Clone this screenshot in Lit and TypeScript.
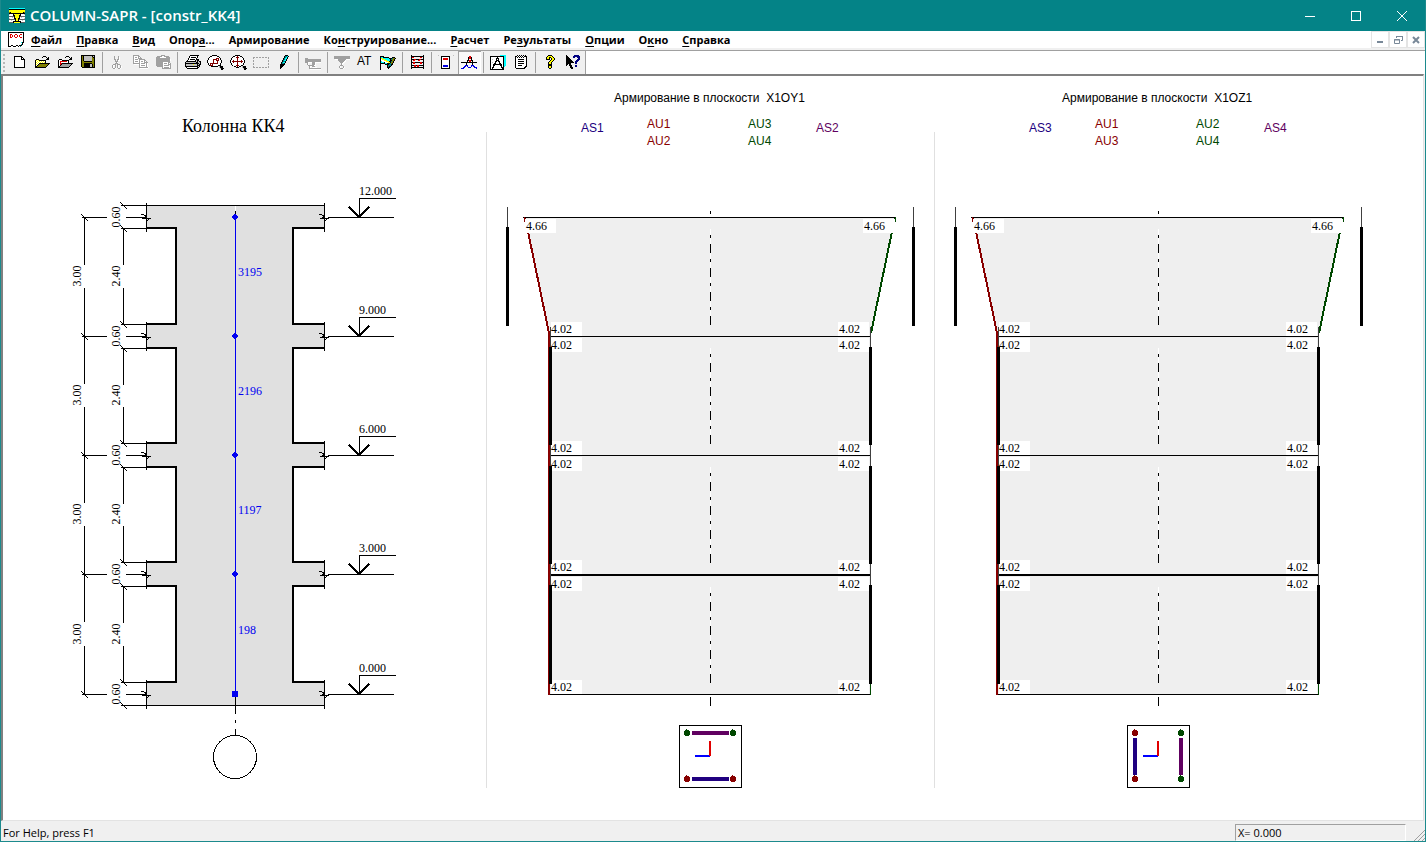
import { LitElement, html, svg, css, nothing } from "lit";
import { customElement, property } from "lit/decorators.js";

const PALETTE: Record<string, string> = {
  k: "#000000", w: "#ffffff", y: "#ffff00", o: "#808000", g: "#a0a0a0",
  r: "#e00000", m: "#800000", c: "#00ffff", t: "#008080", b: "#0000e0",
  n: "#000080", s: "#c0c0c0", d: "#606060", e: "#006000",
};

const GLYPHS: Record<string, string[]> = {
  new: [
    "", "...kkkkkkkk", "...kwwwwwwkk", "...kwwwwwwkwk", "...kwwwwwwkkkk",
    "...kwwwwwwwwwk", "...kwwwwwwwwwk", "...kwwwwwwwwwk", "...kwwwwwwwwwk",
    "...kwwwwwwwwwk", "...kwwwwwwwwwk", "...kwwwwwwwwwk", "...kkkkkkkkkkk",
  ],
  open: [
    "", ".........kkk", "........k...k.k", ".............kk", "..kkk.......kkk",
    ".kywykkkkkkk", ".kwywywywywk", ".kywywywywyk", ".kwywkkkkkkkkkkk", ".kywkoooooooook",
    ".kwkoooooooook", ".kkoooooooook", ".kkkkkkkkkkk",
  ],
  openRed: [
    "", ".........kkk", "........k...k.k", ".............kk", "..kkk.......kkk",
    ".kwwwkkkkkkk", ".kwrrrrrrrwk", ".kwrwwwwwwwk", ".kwrrkkkkkkkkkkk", ".kwrkgggggggggk",
    ".kwkgggggggggk", ".kkgggggggggk", ".kkkkkkkkkkk",
  ],
  save: [
    ".kkkkkkkkkkkkkk", ".kokssssssssksk", ".kokssssssssokk", ".kokssssssssook", ".kokssssssssook",
    ".kokssssssssook", ".kookkkkkkkkook", ".kooooooooooook", ".kookkkkkkkkook",
    ".kookkkkkksskok", ".kookkkkkksskok", ".kookkkkkksskok", "..kkkkkkkkkkkkk",
  ],
  cut: [
    "", ".....g...g", ".....g...gw", ".....g...gw", ".....gg.ggw", "......g.gww", "......ggg",
    ".......gw", "......ggg", "....ggg.ggg", "...gwwg.gw.g", "...gw.g.gw.gw",
    "...gw.g.gw.gw", "....ggw..ggw",
  ],
  copy: [
    ".gggggg", ".gwwwwgg", ".gwggwgwg", ".gwwwwgggg", ".gwgggwgggggg", ".gwwwwwgwwwwgg",
    ".gwgggwgwggwgwg", ".gwwwwwgwwwwgggg", ".gggggggwggggwgw", "..wwwwwgwwwwwwgw", ".......gwggggwgw", ".......gwwwwwwgw",
    ".......gggggggggw", "........wwwwwwww",
  ],
  paste: [
    "......gggg", "..gggggwwggggg", ".ggggwwwwwwgggg", ".gggggggggggggg", ".ggggggggggggggw",
    ".ggggggggggggggw", ".gggggggggggggg", ".gggggggwwwwwgg", ".gggggggwgggwgwg", ".gggggggwwwwwggg",
    ".gggggggwgggggwg", "..ggggggwwwwwwwg", ".......gwgggggwg", ".......ggggggggg",
  ],
  print: [
    "......kkkkkkkkk", ".....kwwwwwwwk", ".....kwkkkkkwk", "....kwwwwwwwk", "....kwkkkkkwkkk",
    "...kwwwwwwwkskk", "..kkkkkkkkkkskskk", ".ksssssssssskkssk", ".kkkkkkkkkkkkkksk", ".ksssssssyssskskk",
    ".kssssssssssskkk", ".kkkkkkkkkkkkksk", "..kwwwwwwwwwwkk", "...kkkkkkkkkkk",
  ],
  zoomRect: [
    ".....kkkkk", "...kkwwwwwkk", "..kwwwwwwwwwk", ".kwwwwwwwmmmwk", ".kwwwwmmmmwmwk", "kwwwwwmwwmmmwwk",
    "kwwwwwmwwwmwwwk", "kwwwwwmwwwmwwwk", ".kwmmmmmmmmwwk", ".kwmwmwwwwwwwk", "..kmmmwwwwwkkk",
    "....kkkkkkk.skkk", "............skkk", ".............skkk", "..............kk",
  ],
  zoomAll: [
    ".....kkkkk", "...kkwwmwwkk", "..kwwwmmmwwwk", ".kwwwwwmwwwwwk", ".kwwwwwmwwwwwk", "kwwmwwwmwwwmwwk",
    "kwmmmmmmmmmmmwk", "kwwmwwwmwwwmwwk", ".kwwwwwmwwwwwk", ".kwwwwwmwwwwwk", "..kwwwmmmwwkk",
    "....kkwmwkk.skkk", "......kkk...skkk", ".............skkk", "..............kk",
  ],
  marquee: [
    "", "", "gg.gg.gg.gg.gg.g", "g..............g", "", "g..............g", "g..............g", "",
    "g..............g", "g..............g", "", "g..............g", "gg.gg.gg.gg.gg.g",
  ],
  pen: [
    ".........kkk", "........kttck", "........ktck", ".......ktcck", ".......ktck", "......ktcck", "......kttk",
    ".....ktcck", ".....kttk", "....kkkkk", "....kkkk", "....kkk", "....kk", "....k",
  ],
  beam: [
    "", "", "", "ggg", "gggggggggggggggg", "gggggggggggggggg", "gggggggggggggggg", "gggwwwwgggwwwwww",
    "..gw...gggw", "..gw...gggw", "...ggggggww", "....gwwggg", "....gw..wwww", "....gggggggggggg", ".....wwwwwwwwwww",
  ],
  support: [
    "", "gggggggggggggggg", "gggggggggggggggg", "gggggggggggggggg", ".wwwggggggggwwww", "....gggggggw",
    ".....gggggww", "......gggww", ".......gww", ".......gw", "......ggg", ".....gw..g", ".....gw..gw", "......gggw",
  ],
  flag: [
    "", "kkkk", "kcckkkkkk...kkk", "kyycccccckkktook", "kwyyycccccktook", "kwwwyyyccckkook", "kcwwwwyyykktok",
    "kccckwwwyykook", "kkkkkcckkktok", "k....kkkkttkk", "k......ktttk", "k......ktkk", "k......kkk", "k.......k", "k",
  ],
  abacus: [
    "..k...........k", "..kkkkkkkkkkkkk", "..krr......rr.k", "..k...........k", "..kkkrrkkkrrkkk",
    "..k.rr...rr...k", "..k...........k", "..kkrrkkkkkrrkk", "..k.rr.....rr.k", "..k...........k",
    "..kkkrrkrrkkkkk", "..k..rr.rr....k", "..kkkkkkkkkkkkk", "..k...........k",
  ],
  card: [
    "s..............s", "...kkkkkkkkk", "...kwwwwwwwk", "...kwrrrrrwk", "...kwrrrrrwk", "...kwwwwwwwk",
    "...kwwwwwwwk", "...kwwwwwwwk", "...kwwwwwwwk", "...kwwwwwwwk", "...kwbbbbbwk", "...kwbbbbbwk",
    "...kwwwwwwwk", "...kkkkkkkkk",
  ],
  forces: [
    "", "........rr", ".......krrk", ".......krrk", ".......k..k", "......kkrrkk", "......k.rr.k",
    "kkkkkkkkkkkkkkkk", ".....k.....k", ".....k.....k", "....bbb...bbb", "...bb.b...b.bb",
    "..bb...bbb...bbb", "bbb............b",
  ],
  compass: [
    "..........cccccc", "kkkkkkkkkkkkkkcc", "kwwwwwwkwwwwwkcc", "kwwwwwkkkwwwwkcc", "kwswwwkwkwwwwkcc", "kwwwwwkkkwwwwkcc",
    "kwwwwkkwkkwwwkcc", "kwswwkwwwkwwwkcc", "kwwwkkwwwkkwwkcc", "kwwkkkkkkkkkwkcc", "kwwkkwwwwwkkwkcc",
    "kwwkwwwwwwwkwkc", "kwkkwwwwwwwkkk", "kwkwwwwwwwwwkk", "kkkkkkkkkkkkkk",
  ],
  notes: [
    "....k.k.k.k.k", "..kkwkwkwkwkkk", "..kwkwkwkwkwwk", "..kwwwwwwwwwwk", "..kwwkkkkkkwwk", "..kwwwwwwwwwwk",
    "..kwwkkkkkkwwk", "..kwwwwwwwwwwk", "..kwwkkkkkkwwk", "..kwwwwwwwwwwk", "..kwwkkkkwwwwk", "..kwwwwwwwwwkk",
    "..kwwwwwwwwkk", "...kkkkkkkkk",
  ],
  help: [
    "......kkkk", ".....kyyyyk", "....kyykkyyk", "....kyyk.kyyk", "....kkkk.kyyk", "........kyyk", ".......kyyk",
    "......kyyk", "......kyyk", "......kkkk", "......kkkk", "......kyyk", "......kyyk", ".......kk",
  ],
  whatsThis: [
    ".k.......nnnnn", ".kk.....nnnnnnn", ".kkk....nn..nnn", ".kkkk........nn", ".kkkkk......nnn", ".kkkkkk....nnn",
    ".kkkkkkk..nnn", ".kkkkkkkk.nn", ".kkkkk....nn", ".kk.kk", ".k..kkk...nn", ".....kk...nn", ".....kkk", "......kk",
  ],
  app: [
    "cccccccccccccccc", "kkkkkkkkkkkkkkkk", "yyyyyyyyyyyyyyyy", "yyyyyyyyyyyyyyyy", "okyyyyyyyyyyyyko", "kkkkkkkkkkkkkkkk",
    "swwwkyyyyyykwwws", "wwwwkkyyyykkwwww", "dddddkyyyykddddd", "wwwswkyyyykwswww", "swwwwkkyykkwwwws",
    "ddddddkyykdddddd", "wwswwwkyykwwwsww", "wwwwkkkkkkkkwwww", "ddddkyyyyyykdddd",
  ],
  doc: [
    "kkkkkkkkkkkkkkkk", "kwwwwwwwwwwwwwwk", "kwrrwwwrrwwwrrwk", "kwrwrwrwwrwrwwwk", "kwrwrwrwwrwrwwwk", "kwrrwwwrrwwwrrwk",
    "kwwwwwwwwwwwwwwk", "kwwwwwwwwwwwwwwk", "kwwwwwwwwwwwwwwk", "kwwwwwwwwwwwwwwk", "kwwwwwwwwwwwwckk", "kwwwwwwwwwwwwwk",
    "kwwwwwwwwwwwwtk", "kwwkkwwwkkwkkk", "kkk..kkk..k.t",
  ],
};

/** Small bitmap-style symbol: every character of a row is one cell. */
function glyph(name: string) {
  const cells = [];
  GLYPHS[name].forEach((row, y) => {
    for (let x = 0; x < row.length; ) {
      let end = x + 1;
      while (end < row.length && row[end] === row[x]) end++;
      if (PALETTE[row[x]]) cells.push(svg`<rect x=${x} y=${y} width=${end - x} height="1" fill=${PALETTE[row[x]]}></rect>`);
      x = end;
    }
  });
  return html`<svg class="glyph" viewBox="0 0 17 15" width="17" height="15" aria-hidden="true">${cells}</svg>`;
}

const rect = (x: number, y: number, w: number, h: number, fill = "#000") =>
  svg`<rect x=${x} y=${y} width=${w} height=${h} fill=${fill}></rect>`;
const label = (x: number, y: number, text: string, cls = "") => svg`<text x=${x} y=${y} class=${cls}>${text}</text>`;
const upright = (x: number, y: number, text: string) =>
  svg`<text text-anchor="middle" transform="translate(${x} ${y}) rotate(-90)">${text}</text>`;

@customElement("column-scheme")
export class ColumnScheme extends LitElement {
  static styles = css`
    :host { display: block; }
    svg { display: block; width: 100%; height: auto; shape-rendering: crispEdges; }
    text { font: 12px "Liberation Serif", serif; fill: #000; }
    .title { font-size: 18px; }
    .member { fill: #0000f0; }
    .thin { fill: none; stroke: #000; stroke-width: 1; }
    .bold { fill: none; stroke: #000; stroke-width: 2; }
  `;

  render() {
    const levels = [217, 336, 455, 574, 694];
    const marks = ["12.000", "9.000", "6.000", "3.000", "0.000"];
    const members = ["3195", "2196", "1197", "198"];
    const top = (i: number) => (i === 0 ? 205 : levels[i] - 13);
    const bottom = (i: number) => (i === 0 ? 227 : i === 4 ? 705 : levels[i] + 11);
    const tick = (x: number, y: number) => svg`<path class="thin" d="M${x - 3} ${y - 3}L${x + 4} ${y + 4}"></path>`;
    return html`<svg viewBox="3 76 484 744" role="img" aria-label="Колонна КК4">
      ${label(182, 132, "Колонна КК4", "title")}
      ${rect(176, 206, 118, 499, "#e0e0e0")}
      ${levels.map((y, i) => svg`
        ${rect(147, top(i), 177, bottom(i) - top(i), "#e0e0e0")}
        ${i === 0 ? rect(146, 205, 179, 1) : svg`${rect(146, top(i), 31, 2)}${rect(292, top(i), 33, 2)}`}
        ${i === 4 ? rect(146, 705, 179, 1) : svg`${rect(146, bottom(i), 31, 2)}${rect(292, bottom(i), 33, 2)}`}
        ${rect(146, y - 14, 1, 29)}${rect(324, y - 14, 1, 29)}
        ${rect(82, y, 25, 1)}${rect(126, y, 18, 1)}${rect(328, y, 66, 1)}
        ${[146, 324].map((x) => svg`<path class="thin" d="M${x - 5} ${y - 3}L${x + 1} ${y - 1}L${x - 2} ${y + 1}L${x + 5} ${y + 1}L${x} ${y + 4}"></path>`)}
        ${tick(84, y)}${tick(123, i === 0 ? 205 : top(i) + 1)}${tick(123, i === 4 ? 705 : bottom(i) + 1)}
        ${rect(121, i === 0 ? 205 : top(i) + 1, 25, 1)}${rect(121, i === 4 ? 705 : bottom(i) + 1, 25, 1)}
        ${upright(120, y, "0.60")}
        ${label(359, y - 22, marks[i])}
        ${rect(359, y - 19, 37, 1)}${rect(359, y - 19, 1, 20)}
        <path class="bold" d="M349 ${y - 10}L359 ${y}L369 ${y - 10}"></path>`)}
      ${members.map((name, i) => {
        const from = bottom(i);
        const to = top(i + 1) + 2;
        const mid = Math.round((levels[i] + levels[i + 1]) / 2 - 0.1);
        return svg`
          ${rect(175, from, 2, to - from)}${rect(292, from, 2, to - from)}
          ${rect(123, from + 2, 1, 36)}${rect(123, mid + 12, 1, to - mid - 12)}
          ${rect(84, levels[i], 1, 48)}${rect(84, mid + 12, 1, levels[i + 1] - mid - 12)}
          ${upright(81, mid, "3.00")}${upright(120, mid, "2.40")}
          ${label(238, mid, name, "member")}`;
      })}
      ${rect(235, 206, 1, 5, "#fff")}${rect(235, 211, 1, 4)}${rect(235, 217, 1, 474, "#0000f0")}
      ${levels.slice(0, 4).map((y) => svg`<path d="M234 ${y - 3}h2v1h1v1h1v2h-1v1h-1v1h-2v-1h-1v-1h-1v-2h1v-1h1z" fill="#0000f0"></path>`)}
      ${rect(232, 691, 6, 6, "#0000f0")}
      ${rect(235, 697, 1, 17)}${rect(235, 720, 1, 3)}${rect(235, 729, 1, 7)}
      <circle class="thin" cx="235" cy="757" r="21.5"></circle>
      ${rect(486, 132, 1, 656, "#e0e0e0")}
    </svg>`;
  }
}

@customElement("bar-scheme")
export class BarScheme extends LitElement {
  static styles = css`
    :host { display: block; }
    svg { display: block; width: 100%; height: auto; shape-rendering: crispEdges; }
    text { font: 12px "Liberation Serif", serif; fill: #000; }
    .sans { font-family: "Liberation Sans", sans-serif; }
    .navy { fill: #200080; }
    .plum { fill: #600060; }
    .red { fill: #880000; }
    .green { fill: #004800; }
  `;

  @property() plane = "";
  @property({ type: Array }) names: string[] = [];
  @property({ type: Number }) span = 448;
  @property({ type: Boolean }) vertical = false;
  @property({ type: Boolean }) divider = false;

  render() {
    const [sideA, leftA, leftB, rightA, rightB, sideB] = this.names;
    const value = (x: number, y: number, text: string, boxX = x, w = 31) =>
      svg`${rect(boxX, y - 11, w, 14, "#fff")}${label(x, y, text)}`;
    const solid = [[347, 98], [466, 98], [585, 99]];
    const hair = [[327, 20], [445, 21], [564, 21]];
    const dot = (x: number, y: number) => svg`<path
      d="M${x - 1} ${y - 4}h1v1h2v1h1v4h-1v1h-4v-1h-1v-4h1v-1h1z"
      fill=${(this.vertical ? x < 700 : y > 750) ? "#880000" : "#004800"}></path>`;
    return html`<svg viewBox="487 76 ${this.span} 744" role="img" aria-label="Армирование в плоскости ${this.plane}">
      <text class="sans" x="614" y="102">Армирование в плоскости${"\u00a0 "}${this.plane}</text>
      ${label(581, 132, sideA, "sans navy")}
      ${label(647, 128, leftA, "sans red")}${label(647, 145, leftB, "sans red")}
      ${label(748, 128, rightA, "sans green")}${label(748, 145, rightB, "sans green")}
      ${label(816, 132, sideB, "sans plum")}
      <path d="M524 217H896L871 333V694H549V333Z" fill="#efefef"></path>
      <path d="M525 217L549 333" stroke="#880000" stroke-width="2"></path>
      <path d="M895 217L871 333" stroke="#004800" stroke-width="2"></path>
      ${rect(548, 333, 2, 362, "#880000")}
      ${rect(523, 217, 373, 1)}${rect(550, 336, 320, 1)}${rect(550, 455, 320, 1)}${rect(550, 574, 320, 2)}${rect(550, 694, 320, 1)}
      ${value(526, 230, "4.66", 525)}${value(864, 230, "4.66", 863, 32)}
      ${[333, 349, 452, 468, 571, 588, 691].map((y) => svg`${value(551, y, "4.02")}${value(839, y, "4.02", 838)}`)}
      ${rect(524, 217, 1, 5, "#880000")}${rect(895, 217, 1, 5, "#004800")}
      ${solid.map(([y, h]) => svg`${rect(549, y, 3, h)}${rect(869, y, 3, h)}`)}
      ${hair.map(([y, h]) => svg`${rect(550, y, 1, h, "#404040")}${rect(870, y, 1, h, "#404040")}`)}
      ${rect(870, 684, 1, 11, "#004800")}
      ${[507, 913].map((x) => svg`${rect(x, 207, 1, 20, "#404040")}${rect(x - 1, 227, 3, 99)}`)}
      ${rect(710, 211, 1, 3)}${rect(710, 697, 1, 9)}
      ${[235, 354, 473, 593].map((y) => svg`${rect(710, y - 6, 1, 95, "#fff")}
        ${[0, 24, 48, 72].map((d) => svg`${rect(710, y + d, 1, 3)}${rect(710, y + d + 9, 1, 9)}`)}`)}
      ${rect(679, 725, 63, 63)}${rect(680, 726, 61, 61, "#fff")}
      ${this.vertical
        ? svg`${rect(685, 738, 4, 37, "#200080")}${rect(731, 738, 4, 37, "#600060")}`
        : svg`${rect(692, 731, 37, 4, "#600060")}${rect(692, 777, 37, 4, "#200080")}`}
      ${[[687, 733], [733, 733], [687, 779], [733, 779]].map(([x, y]) => dot(x, y))}
      ${rect(695, 755, 15, 2, "#0000ff")}${rect(709, 741, 2, 15, "#e00000")}
      ${this.divider ? rect(934, 132, 1, 656, "#e0e0e0") : nothing}
    </svg>`;
  }
}

const MENU: [string, string, string][] = [
  ["", "Ф", "айл"], ["", "П", "равка"], ["", "В", "ид"], ["Опор", "а", "..."], ["Армирование", "", ""],
  ["Ко", "н", "струирование..."], ["", "Р", "асчет"], ["Ре", "з", "ультаты"], ["", "О", "пции"],
  ["О", "к", "но"], ["", "С", "правка"],
];

const TOOLS: [string, string][][] = [
  [["new", "Создать"], ["open", "Открыть"], ["openRed", "Импорт"], ["save", "Сохранить"]],
  [["cut", "Вырезать"], ["copy", "Копировать"], ["paste", "Вставить"]],
  [["print", "Печать"], ["zoomRect", "Увеличить"], ["zoomAll", "Показать все"], ["marquee", "Рамка"], ["pen", "Карандаш"]],
  [["beam", "Балка"]],
  [["support", "Опора"], ["at", "Армирование"], ["flag", "Флаги"]],
  [["abacus", "Расчет"]],
  [["card", "Сечение"], ["forces", "Эпюры"]],
  [["compass", "Чертеж"], ["notes", "Отчет"]],
  [["help", "Справка"], ["whatsThis", "Что это?"]],
];

@customElement("app-root")
export class AppRoot extends LitElement {
  static styles = css`
    :host {
      display: flex; flex-direction: column; box-sizing: border-box; min-height: 100vh;
      border: solid #1c8a8d; border-width: 0 1px 1px; background: #f0f0f0; color: #000;
      font: 11px "Open Sans", "Noto Sans", sans-serif;
    }
    button { appearance: none; border: 0; margin: 0; padding: 0; background: none; color: inherit; font: inherit; }
    .glyph { display: block; shape-rendering: crispEdges; overflow: visible; }
    .title-bar { display: flex; align-items: center; height: 31px; padding-left: 8px; background: #048387; color: #fff; }
    .title-bar h1 { flex: 1; margin: 0; padding-left: 4px; font-size: 15px; line-height: 31px; font-weight: 600; }
    .caption { display: grid; place-items: center; width: 46px; height: 30px; }
    .caption svg { fill: none; stroke: #fff; shape-rendering: crispEdges; }
    .caption .smooth { shape-rendering: auto; }
    .menu-bar { display: flex; align-items: center; height: 17px; padding-left: 7px; background: #fff; border-bottom: 2px solid #f0f0f0; }
    .menu { display: flex; flex: 1; gap: 14px; padding-left: 6px; }
    .menu button { font-weight: 700; line-height: 16px; }
    .key { text-decoration: underline; text-underline-offset: 2px; }
    .child { display: grid; place-items: center; box-sizing: border-box; width: 18px; height: 17px; border: 1px solid #e4e4e4; }
    .tool-row { display: flex; height: 23px; border-top: 1px solid #a0a0a0; background: #fff; }
    .tools { display: flex; padding-left: 7px; background: #f0f0f0; border-right: 1px solid #a0a0a0; }
    .grip { width: 2px; margin: 3px 0 2px -5px; padding-right: 3px; background: repeating-linear-gradient(#b8b8b8 0 2px, #f0f0f0 2px 4px) content-box; }
    .group { display: flex; }
    .group + .group::before { content: ""; width: 1px; margin: 1px 3px 1px 2px; background: #a0a0a0; }
    .tool { display: flex; align-items: flex-start; box-sizing: border-box; width: 23px; height: 23px; padding: 4px 0 0 3px; }
    .tool.on { background: #f8f8f8; box-shadow: inset 1px 1px #a0a0a0, inset -1px -1px #fff; }
    .letters { font: 12px/12px "Liberation Sans", sans-serif; }
    .sheet { display: grid; grid-template-columns: 484fr 448fr 488fr; align-content: start; flex: 1; background: #fff;
      border: solid; border-width: 2px 1px 1px 2px; border-color: #808080 #e3e3e3 #e3e3e3 #808080; margin-right: 1px; }
    .status { display: flex; align-items: center; height: 20px; padding-left: 2px; }
    .hint { flex: 1; padding-top: 3px; line-height: 17px; }
    .coord { box-sizing: border-box; width: 171px; height: 17px; margin-top: 2px; padding-left: 2px; line-height: 16px;
      border: 1px solid; border-color: #a0a0a0 #fff #fff #a0a0a0; }
    .size-grip { align-self: end; display: block; margin-left: 7px; }
  `;

  render() {
    return html`
      <header class="title-bar">
        ${glyph("app")}
        <h1>COLUMN-SAPR - [constr_KK4]</h1>
        <button class="caption" aria-label="Свернуть"><svg width="10" height="10"><path d="M0 5.5h10"></path></svg></button>
        <button class="caption" aria-label="Развернуть"><svg width="10" height="10"><path d="M.5.5h9v9h-9z"></path></svg></button>
        <button class="caption" aria-label="Закрыть"><svg class="smooth" width="10" height="10"><path d="M0 0l10 10M10 0L0 10"></path></svg></button>
      </header>
      <nav class="menu-bar">
        ${glyph("doc")}
        <div class="menu">
          ${MENU.map(([before, key, after]) => html`<button>${before}<span class="key">${key}</span>${after}</button>`)}
        </div>
        <button class="child" aria-label="Свернуть окно"><svg width="10" height="9"><path d="M2 7h6" stroke="#788898" stroke-width="2"></path></svg></button>
        <button class="child" aria-label="Восстановить окно"><svg width="10" height="9" fill="none" stroke="#788898"><path d="M3.5 3V1.5h6v4H8M3 1.5h7M1.5 4.5h5v4h-5zM1 5h6"></path></svg></button>
        <button class="child" aria-label="Закрыть окно"><svg width="10" height="9"><path d="M2 2l6 6M8 2L2 8" stroke="#788898" stroke-width="2"></path></svg></button>
      </nav>
      <div class="tool-row">
        <div class="tools" role="toolbar">
          <span class="grip"></span>
          ${TOOLS.map((group) => html`<div class="group">
            ${group.map(([name, title]) => html`<button class=${name === "forces" ? "tool on" : "tool"} aria-label=${title}>
              ${name === "at" ? html`<span class="letters">AT</span>` : glyph(name)}</button>`)}
          </div>`)}
        </div>
      </div>
      <main class="sheet">
        <column-scheme></column-scheme>
        <bar-scheme plane="X1OY1" divider .names=${["AS1", "AU1", "AU2", "AU3", "AU4", "AS2"]}></bar-scheme>
        <bar-scheme plane="X1OZ1" vertical .span=${488} .names=${["AS3", "AU1", "AU3", "AU2", "AU4", "AS4"]}></bar-scheme>
      </main>
      <footer class="status">
        <span class="hint">For Help, press F1</span>
        <output class="coord">X= 0.000</output>
        <svg class="size-grip" width="12" height="12" stroke="#a0a0a0" stroke-width="1"><path d="M1 12L12 1M5 12l7-7M9 12l3-3"></path></svg>
      </footer>`;
  }
}
